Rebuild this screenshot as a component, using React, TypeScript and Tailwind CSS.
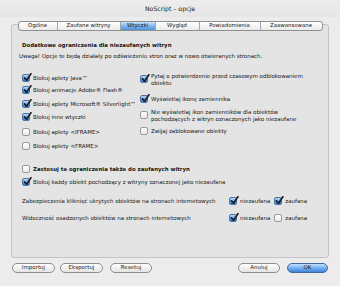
import React from "react";

type CheckProps = { checked?: boolean };

function Check({ checked = false }: CheckProps) {
  if (checked) {
    return (
      <span className="relative shrink-0 w-[8px] h-[8px] rounded-[2px] border border-[#4d74a6] bg-gradient-to-b from-[#b9dafa] via-[#6aa8ea] to-[#2f7bd3]">
        <svg
          viewBox="0 0 10 10"
          className="absolute left-[0px] top-[-2px] w-[9px] h-[9px]"
        >
          <path
            d="M1.6 5.4 L4 8 L8.8 0.8"
            fill="none"
            stroke="#1b1b1b"
            strokeWidth="1.8"
            strokeLinecap="round"
            strokeLinejoin="round"
          />
        </svg>
      </span>
    );
  }
  return (
    <span className="shrink-0 w-[8px] h-[8px] rounded-[2px] border border-[#9a9a9a] bg-gradient-to-b from-white to-[#e9e9e9]" />
  );
}

function Row({
  checked,
  children,
  className = "",
}: {
  checked?: boolean;
  children: React.ReactNode;
  className?: string;
}) {
  return (
    <div className={`flex items-center gap-[3px] h-[8px] ${className}`}>
      <Check checked={checked} />
      <span className="whitespace-nowrap">{children}</span>
    </div>
  );
}

const tabs = [
  { label: "Ogólne", w: "w-[38px]" },
  { label: "Zaufane witryny", w: "w-[63px]" },
  { label: "Wtyczki", w: "w-[35px]", active: true },
  { label: "Wygląd", w: "w-[44px]" },
  { label: "Powiadomienia", w: "w-[61px]" },
  { label: "Zaawansowane", w: "w-[62px]" },
];

function Button({
  children,
  w,
  primary = false,
}: {
  children: React.ReactNode;
  w: string;
  primary?: boolean;
}) {
  return (
    <button
      className={`${w} h-[10px] rounded-full border flex items-center justify-center leading-none ${
        primary
          ? "border-[#41689c] bg-gradient-to-b from-[#c4e0fb] via-[#75b0ee] to-[#3c86d8] text-[#111]"
          : "border-[#8e8e8e] bg-gradient-to-b from-white to-[#e4e4e4] text-[#1e1e1e]"
      }`}
    >
      {children}
    </button>
  );
}

export default function App() {
  return (
    <div className="w-[340px] h-[286px] overflow-hidden bg-[#ececec] flex flex-col font-['DejaVu_Sans',sans-serif] text-[5.5px] leading-[7px] text-[#161616]">
      <div className="h-[17px] shrink-0 flex items-center justify-center text-[6.2px] text-[#222] bg-gradient-to-b from-[#ededed] to-[#e6e6e6]">
        NoScript – opcje
      </div>

      <div className="mx-[11px] mt-[4px] flex flex-col">
        <div className="relative z-10 self-center flex h-[10px] rounded-[3px] border border-[#8f8f8f] bg-gradient-to-b from-white to-[#ebebeb] overflow-hidden text-[5.4px]">
          {tabs.map((t, i) => (
            <div
              key={t.label}
              className={`${t.w} flex items-center justify-center leading-none ${
                i > 0 ? "border-l border-[#a6a6a6]" : ""
              } ${
                t.active
                  ? "bg-gradient-to-b from-[#c7e1fa] via-[#80b6ee] to-[#4d92dc] text-[#0e0e0e]"
                  : ""
              }`}
            >
              {t.label}
            </div>
          ))}
        </div>

        <div className="-mt-[7px] h-[234px] rounded-[3px] border border-[#c3c3c3] bg-[#e4e4e4] pl-[10px] pt-[17px]">
          <div className="font-bold text-[5.4px]">
            Dodatkowe ograniczenia dla niezaufanych witryn
          </div>
          <div className="mt-[4px] -ml-[3px]">
            Uwaga! Opcje te będą działały po odświeżeniu stron oraz w nowo
            otwieranych stronach.
          </div>

          <div className="flex mt-[14px]">
            <div className="w-[118px] flex flex-col">
              <Row checked>Blokuj aplety Java™</Row>
              <Row checked className="mt-[4px]">
                Blokuj animacje Adobe® Flash®
              </Row>
              <Row checked className="mt-[6px]">
                Blokuj aplety Microsoft® Silverlight™
              </Row>
              <Row checked className="mt-[5px]">
                Blokuj inne wtyczki
              </Row>
              <Row className="mt-[7px]">Blokuj aplety &lt;IFRAME&gt;</Row>
              <Row className="mt-[6px]">Blokuj aplety &lt;FRAME&gt;</Row>
            </div>
            <div className="flex flex-col">
              <div className="flex items-start gap-[3px]">
                <span className="mt-[1px] flex">
                  <Check checked />
                </span>
                <span className="leading-[7px] -mt-[1px]">
                  Pytaj o potwierdzenie przed czasowym odblokowaniem
                  <br />
                  obiektu
                </span>
              </div>
              <Row checked className="mt-[8px]">
                Wyświetlaj ikonę zamiennika
              </Row>
              <div className="mt-[6px] flex items-start gap-[3px]">
                <span className="mt-[2px] flex">
                  <Check />
                </span>
                <span className="leading-[7px]">
                  Nie wyświetlaj ikon zamienników dla obiektów
                  <br />
                  pochodzących z witryn oznaczonych jako niezaufane
                </span>
              </div>
              <Row className="mt-[4px]">Zwijaj zablokowane obiekty</Row>
            </div>
          </div>

          <Row className="mt-[15px] font-bold text-[5.4px]">
            Zastosuj te ograniczenia także do zaufanych witryn
          </Row>
          <Row checked className="mt-[5px]">
            Blokuj każdy obiekt pochodzący z witryny oznaczonej jako
            niezaufana
          </Row>

          <div className="mt-[11px] flex items-center h-[8px]">
            <span className="w-[207px] whitespace-nowrap">
              Zabezpieczenia kliknięć ukrytych obiektów na stronach
              internetowych
            </span>
            <Row checked>niezaufana</Row>
            <Row checked className="ml-[4px]">
              zaufana
            </Row>
          </div>
          <div className="mt-[9px] flex items-center h-[8px]">
            <span className="w-[207px] whitespace-nowrap">
              Widoczność osadzonych obiektów na stronach internetowych
            </span>
            <Row checked>niezaufana</Row>
            <Row className="ml-[4px]">zaufana</Row>
          </div>
        </div>
      </div>

      <div className="mt-[5px] px-[12px] flex items-center">
        <Button w="w-[43px]">Importuj</Button>
        <Button w="w-[43px] ml-[5px]">Eksportuj</Button>
        <Button w="w-[42px] ml-[7px]">Resetuj</Button>
        <div className="flex-1" />
        <Button w="w-[42px]">Anuluj</Button>
        <Button w="w-[41px] ml-[7px]" primary>
          OK
        </Button>
      </div>
    </div>
  );
}
